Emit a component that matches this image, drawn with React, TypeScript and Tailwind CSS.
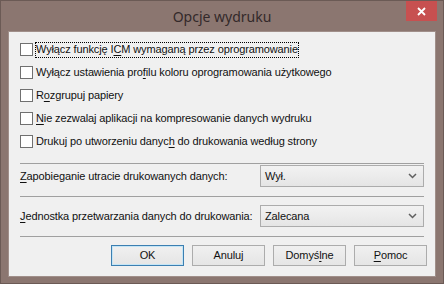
import React from 'react'

const font = { fontFamily: '"Liberation Sans", Arial, sans-serif' }

// label with one underlined access-key letter
const Label = ({ text, u }: { text: string; u: number }) => (
  <span className="whitespace-nowrap">
    {text.slice(0, u)}
    <span className="underline underline-offset-[2px]">{text[u]}</span>
    {text.slice(u + 1)}
  </span>
)

const Check = ({ text, u, focus }: { text: string; u: number; focus?: boolean }) => (
  <div className="h-[23px] flex items-center">
    <div className="w-[13px] h-[13px] border border-[#707070] bg-white shrink-0" />
    <div className={`ml-[2px] px-[1px] h-[16px] flex items-center ${focus ? 'outline-1 outline-dotted outline-black -outline-offset-1' : ''}`}>
      <Label text={text} u={u} />
    </div>
  </div>
)

const Chevron = () => (
  <svg width="9" height="6" viewBox="0 0 9 6">
    <path d="M1 1 L4.5 4.5 L8 1" fill="none" stroke="#606060" strokeWidth="1.5" />
  </svg>
)

const Combo = ({ value }: { value: string }) => (
  <div className="w-[164px] h-[22px] shrink-0 border border-[#acacac] bg-gradient-to-b from-[#f2f2f2] to-[#e5e5e5] flex items-center justify-between pl-[4px] pr-[6px]">
    <span>{value}</span>
    <Chevron />
  </div>
)

const Button = ({ children, primary }: { children: React.ReactNode; primary?: boolean }) => (
  <div
    className={`w-[73px] h-[21px] flex items-center justify-center border bg-gradient-to-b from-[#f0f0f0] to-[#e5e5e5] ${
      primary ? 'border-[#3c7fb1] shadow-[inset_0_0_0_1px_#c4e5f6]' : 'border-[#acacac]'
    }`}
  >
    {children}
  </div>
)

export default function App() {
  return (
    <div className="w-[444px] h-[284px] bg-[#8b7670] border border-[#6b5a55] flex flex-col text-[11px] tracking-[-0.12px] text-[#111]" style={font}>
      <div className="h-[30px] shrink-0 relative flex items-center justify-center">
        <span className="text-[14px] tracking-normal text-[#33292a]" style={{ fontFamily: '"Noto Sans", sans-serif' }}>
          Opcje wydruku
        </span>
        <div className="absolute right-[6px] top-0 w-[31px] h-[20px] bg-[#c75050] flex items-center justify-center">
          <svg width="9" height="9" viewBox="0 0 9 9">
            <path d="M1 1 L8 8 M8 1 L1 8" stroke="white" strokeWidth="1.8" />
          </svg>
        </div>
      </div>
      <div className="mx-[7px] mb-[6px] flex-1 bg-[#f0f0f0] border border-[#a08f8a] px-[11px] pt-[6px]">
        <Check text="Wyłącz funkcję ICM wymaganą przez oprogramowanie" u={16} focus />
        <Check text="Wyłącz ustawienia profilu koloru oprogramowania użytkowego" u={21} />
        <Check text="Rozgrupuj papiery" u={1} />
        <Check text="Nie zezwalaj aplikacji na kompresowanie danych wydruku" u={0} />
        <Check text="Drukuj po utworzeniu danych do drukowania według strony" u={26} />

        <div className="mt-[10px] border-t border-[#a0a0a0]" />
        <div className="mt-[1px] flex items-center justify-between">
          <Label text="Zapobieganie utracie drukowanych danych:" u={0} />
          <Combo value="Wył." />
        </div>

        <div className="mt-[9px] border-t border-[#a0a0a0]" />
        <div className="mt-[8px] flex items-center justify-between">
          <Label text="Jednostka przetwarzania danych do drukowania:" u={0} />
          <Combo value="Zalecana" />
        </div>

        <div className="mt-[9px] border-t border-[#a0a0a0]" />
        <div className="mt-[8px] flex justify-end gap-[8px] -mr-[3px]">
          <Button primary>OK</Button>
          <Button>Anuluj</Button>
          <Button>
            <Label text="Domyślne" u={5} />
          </Button>
          <Button>
            <Label text="Pomoc" u={0} />
          </Button>
        </div>
      </div>
    </div>
  )
}
